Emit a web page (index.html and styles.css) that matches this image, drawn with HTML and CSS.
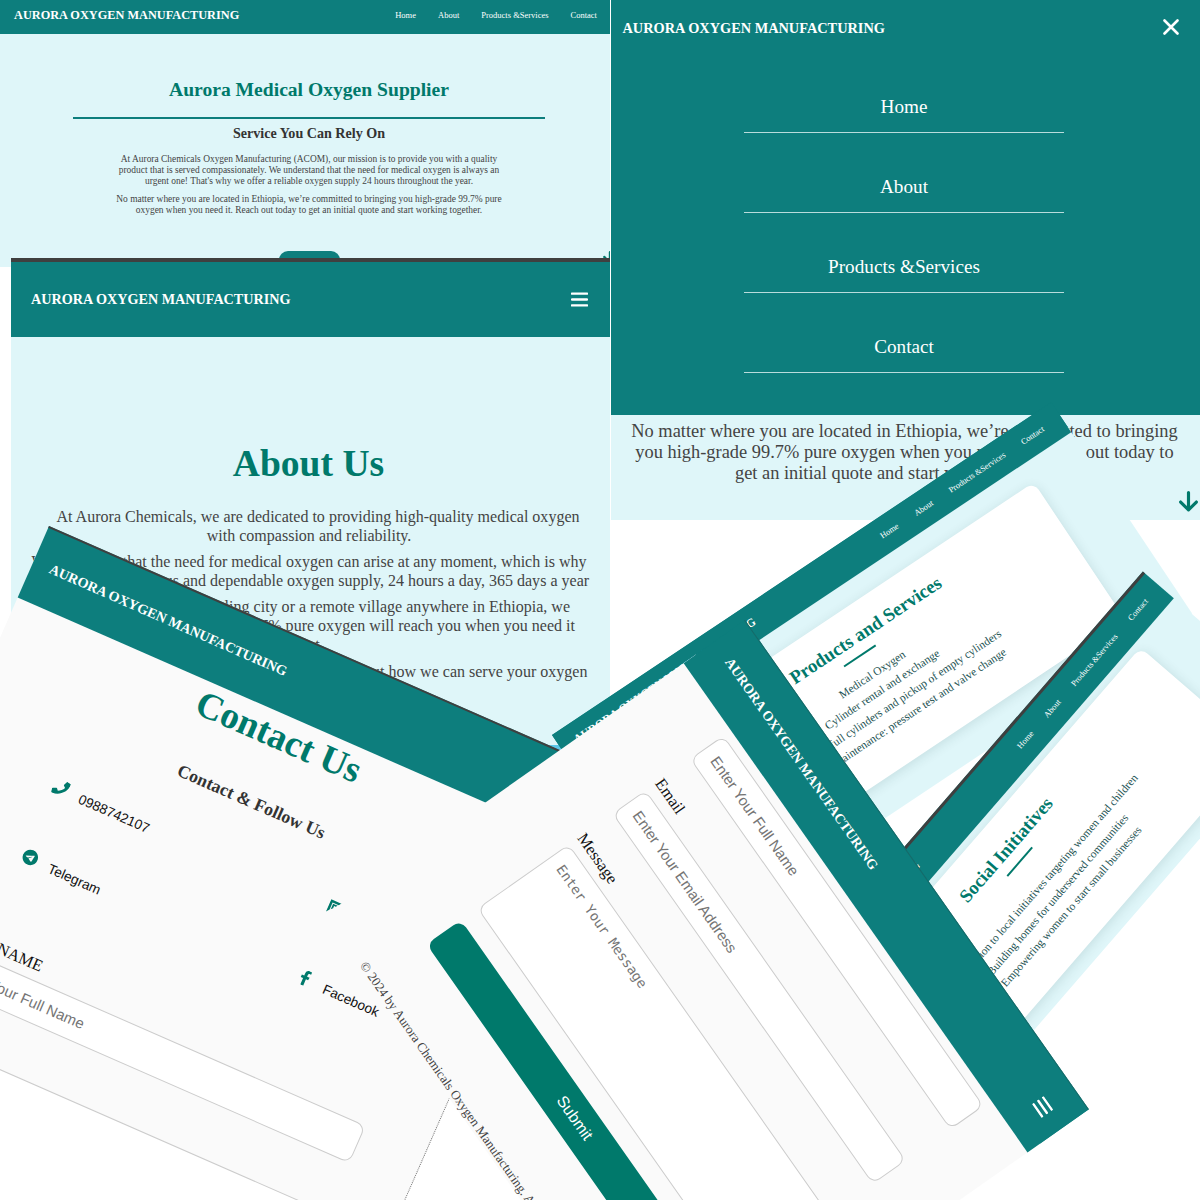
FILE: index.html
```html
<!DOCTYPE html>
<html lang="en">
<head>
<meta charset="utf-8">
<title>Aurora Oxygen Manufacturing</title>
<link rel="stylesheet" href="styles.css">
</head>
<body>
<main class="board">

  <section class="window home">
    <header class="bar"><strong class="brand">AURORA OXYGEN MANUFACTURING</strong>
      <nav class="nav"><a>Home</a><a>About</a><a>Products &amp;Services</a><a>Contact</a></nav></header>
    <h1>Aurora Medical Oxygen Supplier</h1>
    <hr>
    <h2>Service You Can Rely On</h2>
    <p>At Aurora Chemicals Oxygen Manufacturing (ACOM), our mission is to provide you with a quality<br>product that is served compassionately. We understand that the need for medical oxygen is always an<br>urgent one! That's why we offer a reliable oxygen supply 24 hours throughout the year.</p>
    <p>No matter where you are located in Ethiopia, we’re committed to bringing you high-grade 99.7% pure<br>oxygen when you need it. Reach out today to get an initial quote and start working together.</p>
    <div class="cta"></div>
    <svg class="down" viewBox="0 0 20 20"><path d="M10 4v14M3 10l7 8 7-8"/></svg>
  </section>

  <section class="window about">
    <header class="bar"><strong class="brand">AURORA OXYGEN MANUFACTURING</strong>
      <svg class="burger" viewBox="0 0 17 15"><path d="M1 1.600h15M1 7.500h15M1 13.400h15"/></svg></header>
    <h1>About Us</h1>
    <p><span class="lead">At Aurora Chemicals, we are dedicated to providing high-quality medical oxygen</span><br>with compassion and reliability.</p>
    <p>We recognize that the need for medical oxygen can arise at any moment, which is why<br><span class="wide">we provide continuous and dependable oxygen supply, 24 hours a day, 365 days a year</span></p>
    <p>Whether you are in a sprawling city or a remote village anywhere in Ethiopia, we<br><span class="wide">guarantee that our high-grade 99.7% pure oxygen will reach you when you need it</span><br><span class="tail">most.</span></p>
    <p><span class="wide">Please reach out to our team today to learn more about how we can serve your oxygen</span></p>
    <div class="strip"></div>
  </section>

  <section class="window menu">
    <div class="sheet">
      <header class="bar"><strong class="brand">AURORA OXYGEN MANUFACTURING</strong>
        <svg class="close" viewBox="0 0 16 16"><path d="M1.500 1.500l13 13M14.500 1.500l-13 13"/></svg></header>
      <nav class="links"><a>Home</a><a>About</a><a>Products &amp;Services</a><a>Contact</a></nav>
    </div>
    <p>No matter where you are located in Ethiopia, we’re committed to bringing<br>you high-grade 99.7% pure oxygen when you need it. Reach out today to<br>get an initial quote and start working together.</p>
    <svg class="down" viewBox="0 0 20 20"><path d="M10 1.500v16M2.500 10.500l7.500 7.500 7.500-7.500"/></svg>
  </section>

  <section class="window contact">
    <header class="bar"><strong class="brand">AURORA OXYGEN MANUFACTURING</strong></header>
    <h1>Contact Us</h1>
    <h2>Contact &amp; Follow Us</h2>
    <div class="socials">
      <a><svg viewBox="0 0 512 512"><path d="M493.4 24.6l-104-24c-11.3-2.6-22.9 3.3-27.5 13.9l-48 112c-4.2 9.8-1.4 21.3 6.9 28l60.6 49.6c-36 76.7-98.9 140.5-177.2 177.2l-49.6-60.6c-6.8-8.3-18.2-11.1-28-6.9l-112 48C3.9 366.5-2 378.1.6 389.4l24 104C27.1 504.2 36.7 512 48 512c256.1 0 464-207.5 464-464 0-11.2-7.7-20.9-18.6-23.4z"/></svg><span>0988742107</span></a>
      <a><svg viewBox="0 0 16 16"><path d="M.5 1.500h11.500L9.600 4H3v7.500L.5 14.800zM3.900 4.800h5L7.500 6.500H5.700v2.400L3.900 10.800z"/></svg></a>
      <a><svg viewBox="0 0 496 512"><path d="M248 8C111 8 0 119 0 256S111 504 248 504 496 393 496 256 385 8 248 8zM363 176.700c-3.700 39.200-19.900 134.400-28.100 178.300-3.500 18.600-10.300 24.800-16.900 25.400-14.400 1.300-25.300-9.500-39.300-18.700-21.800-14.300-34.200-23.200-55.300-37.200-24.500-16.100-8.600-25 5.300-39.500 3.700-3.800 67.100-61.500 68.300-66.700 .2-.7 .3-3.100-1.200-4.400s-3.600-.8-5.100-.5q-3.300 .7-104.600 69.100-14.800 10.200-26.900 9.900c-8.900-.2-25.900-5-38.600-9.100-15.500-5-27.900-7.700-26.800-16.300q.8-6.700 18.500-13.700 108.400-47.200 144.600-62.300c68.900-28.600 83.200-33.600 92.500-33.800 2.100 0 6.600 .5 9.600 2.900a10.500 10.500 0 0 1 3.500 6.700A43.800 43.800 0 0 1 363 176.700z"/></svg><span>Telegram</span></a>
      <a><svg viewBox="0 0 320 512"><path d="M279.14 288l14.22-92.66h-88.91v-60.13c0-25.35 12.42-50.06 52.24-50.06h40.42V6.26S260.43 0 225.36 0c-73.22 0-121.08 44.38-121.08 124.72v70.62H22.89V288h81.39v224h100.17V288z"/></svg><span>Facebook</span></a>
    </div>
    <form class="fields">
      <label>FULL NAME</label><div class="input">Enter Your Full Name</div>
      <label></label><div class="input area"></div>
    </form>
  </section>

  <section class="window products">
    <header class="bar"><strong class="brand">AURORA OXYGEN MANUFACTURING</strong>
      <nav class="nav"><a>Home</a><a>About</a><a>Products &amp;Services</a><a>Contact</a></nav></header>
    <article class="card">
      <h2>Our Products and Services</h2>
      <ul><li>Medical Oxygen</li><li>Cylinder rental and exchange</li><li>Delivery of full cylinders and pickup of empty cylinders</li><li>Cylinder maintenance: pressure test and valve change</li></ul>
    </article>
  </section>

  <section class="window social">
    <header class="bar"><strong class="brand">AURORA OXYGEN MANUFACTURING</strong>
      <nav class="nav"><a>Home</a><a>About</a><a>Products &amp;Services</a><a>Contact</a></nav></header>
    <article class="card">
      <h2>Social Initiatives</h2>
      <ul><li>Contribution to local initiatives targeting women and children</li><li>Building homes for underserved communities</li><li>Empowering women to start small businesses</li></ul>
    </article>
  </section>

  <section class="window message">
    <header class="bar"><strong class="brand">AURORA OXYGEN MANUFACTURING</strong>
      <svg class="burger" viewBox="0 0 17 15"><path d="M1 1.600h15M1 7.500h15M1 13.400h15"/></svg></header>
    <form class="fields">
      <div class="input">Enter Your Full Name</div>
      <label>Email</label><div class="input">Enter Your Email Address</div>
      <label>Message</label><div class="input area">Enter Your Message</div>
      <div class="submit">Submit</div>
    </form>
    <footer>© 2024 by Aurora Chemicals Oxygen Manufacturing. All rights reserved.</footer>
  </section>

</main>
</body>
</html>
```
FILE: styles.css
```css
* { box-sizing: border-box; }

body {
  margin: 0;
  background: #fff;
  font-family: "Liberation Serif", "Times New Roman", serif;
  color: #444;
}

h1, h2, p, ul { margin: 0; padding: 0; font-size: inherit; white-space: nowrap; }
ul { list-style: none; }
svg { display: block; flex: none; }

.board { position: relative; width: 1200px; height: 1200px; overflow: hidden; }

/* Windows scattered over the board */
.window { position: absolute; background: #dff6f9; transform-origin: 0 0; text-align: center; }

.bar {
  display: flex;
  align-items: center;
  justify-content: space-between;
  background: #0d7e7d;
  color: #fff;
  white-space: nowrap;
}
.nav { display: flex; font-size: 8.400px; }
.burger { width: 17px; height: 15px; }
.burger path { fill: none; stroke: #fff; stroke-width: 2.4; stroke-linecap: round; }
.down path { fill: none; stroke: #00796b; stroke-width: 3; stroke-linecap: round; stroke-linejoin: round; }

/* Desktop home page */
.home { left: 0; top: 0; width: 610px; height: 267px; overflow: hidden; }
.home .bar { height: 34px; padding: 0 13px 4px 14px; }
.home .brand { font-size: 12.300px; }
.home .nav { gap: 22px; font-size: 8.500px; }
.home h1 { margin-top: 43px; padding-left: 8px; font-size: 19.6px; line-height: 26px; color: #00796b; }
.home hr { width: 472px; height: 1.500px; margin: 14px 65px 0 73px; border: 0; background: #0d7e7d; }
.home h2 { margin-top: 5.500px; padding-left: 8px; font-size: 14.100px; line-height: 18px; color: #333; }
.home p { padding-left: 8px; margin-top: 12px; font-size: 9.430px; line-height: 10.9px; }
.home p + p { margin-top: 7.300px; }
.home .cta { width: 61px; height: 30px; margin: 35px 0 0 278.500px; border-radius: 9px; background: #0d7e7d; }
.home .down { position: absolute; left: 602px; top: 249px; width: 16px; height: 16px; }

/* Mobile about page */
.about { left: 11px; top: 258px; width: 599px; height: 494px; overflow: hidden; }
.about .bar { height: 79px; padding: 0 22.500px 0 20px; border-top: 4px solid #3f3f3f; }
.about .brand { font-size: 14.180px; }
.about h1 { margin-top: 102px; padding-right: 4px; font-size: 37.600px; line-height: 50px; color: #00796b; }
.about p { margin-top: 7.200px; padding-right: 3px; font-size: 16.050px; line-height: 19px; }
.about h1 + p { margin-top: 18px; }
.about .lead { padding-left: 18px; }
.about .wide { padding-left: 4px; }
.about .tail { padding-right: 6px; }
.about .strip { position: absolute; left: 0; right: 0; bottom: 0; height: 7px; background: #5bc6e8; }

/* Mobile menu, opened */
.menu { left: 611px; top: 0; width: 589px; height: 520px; }
.menu .sheet { height: 415px; background: #0d7e7d; }
.menu .bar { height: 57px; padding: 0 21px 0 11.500px; }
.menu .close { width: 16px; height: 16px; margin-bottom: 4px; }
.menu .close path { fill: none; stroke: #fff; stroke-width: 2.600; stroke-linecap: round; }
.menu .brand { font-size: 14.340px; }
.menu .links { display: flex; flex-direction: column; width: 320px; margin: 0 auto 0 133px; gap: 4px; color: #fff; font-size: 19.200px; }
.menu .links a { height: 76px; padding-top: 36px; line-height: 28px; border-bottom: 1px solid #b9dcdc; }
.menu p { margin-top: 6px; padding-right: 2px; font-size: 18.400px; line-height: 21px; }
.menu .down { position: absolute; right: 1.500px; bottom: 8px; width: 21px; height: 21px; }

/* Contact page */
.contact { left: 49px; top: 526px; width: 597px; height: 760px; background: #fafafa; transform: rotate(23.680deg); border-right: 1px dotted #777; }
.contact .bar { height: 78px; padding: 0 18px 3px; border-top: 2.500px solid #3f3f3f; }
.contact .brand { font-size: 14.100px; }
.contact h1 { margin-top: -3px; padding-right: 6px; font-size: 37.200px; line-height: 52px; color: #00796b; }
.contact h2 { margin-top: 26px; padding-right: 4px; font-size: 17.800px; line-height: 36px; color: #333; }
.socials { display: grid; grid-template-columns: 300px 200px; grid-auto-rows: 76px; margin: 9px 0 0 108px; color: #111; font: 13.700px/20px "Liberation Sans", Arial, sans-serif; }
.socials a { display: flex; align-items: center; gap: 13px; padding-bottom: 2px; }
.socials svg { width: 16px; height: 16px; fill: #00796b; }
.socials span { padding-top: 5px; }

.fields { display: flex; flex-direction: column; text-align: left; }
.fields label { height: 20px; margin-bottom: 5.500px; font-size: 16.400px; line-height: 19px; color: #111; }
.input {
  height: 41px;
  margin-bottom: 28px;
  padding: 0 12.500px;
  border: 1px solid #ccc;
  border-radius: 9px;
  background: #fff;
  color: #757575;
  font: 14.950px/39px "Liberation Sans", Arial, sans-serif;
}
.contact .fields { margin: 46.500px 65px 0 78px; }
.contact .input { padding-left: 11px; }
.contact .area { height: 240px; margin-right: -65px; }

/* Desktop products page */
.products { left: 551.700px; top: 735px; width: 600px; height: 254px; background: linear-gradient(#0d7e7d 30px, #dff6f9 30px); transform: rotate(-33.690deg); }
.products .bar { height: 35.500px; padding: 0 21px 0 16px; }
.products .brand, .social .brand { font-size: 11.800px; }
.products .nav, .social .nav { gap: 20.500px; }
.card { background: #fff; border-radius: 9px; box-shadow: 0 2px 12px rgba(0, 60, 60, .12); }
.card h2 { font-size: 18.900px; line-height: 24px; color: #00796b; }
.card h2::after { content: ""; display: block; width: 38px; height: 2px; margin: 5px auto 0; background: #00796b; }
.card ul { font-size: 11.500px; line-height: 18.200px; color: #1d5353; }
.products .card { width: 482px; height: 164px; margin: 21.500px 0 0 59px; padding-top: 18px; }
.products .card ul { margin-top: 11.500px; }

/* Desktop social initiatives page */
.social { left: 749.700px; top: 1025.300px; width: 600px; height: 218px; transform: rotate(-49.100deg); }
.social .bar { height: 40.500px; padding: 0 19px 0 16px; border-top: 3px solid #3f3f3f; }
.social .card { width: 482px; height: 155px; margin: 7.500px 0 0 59px; padding-top: 18.500px; }
.social .card h2 { font-size: 18.600px; }
.social .card ul { margin-top: 21.500px; font-size: 11.400px; line-height: 18.600px; }

/* Contact form page */
.message { left: 745px; top: 620px; width: 598px; height: 517px; background: linear-gradient(#0d7e7d 60px, #fafafa 60px); transform: rotate(54.900deg); }
.message .bar { height: 75px; padding: 0 20px 3px 22.500px; border-top: 1px solid rgba(40, 70, 70, .35); }
.message .brand { font-size: 13.950px; }
.message .fields { margin: 9px 63.500px 0 81.500px; }
.message .input.area { height: 112px; margin-bottom: 20px; font: 13.550px/38px "DejaVu Sans Mono", monospace; }
.submit { height: 42px; border-radius: 9px; background: #00796b; color: #fff; text-align: center; font: 16.100px/41px "Liberation Sans", Arial, sans-serif; padding-left: 3px; }
.message footer { margin: 54.500px 0 0 61px; font-size: 13.050px; line-height: 16px; text-align: left; white-space: nowrap; }
```
